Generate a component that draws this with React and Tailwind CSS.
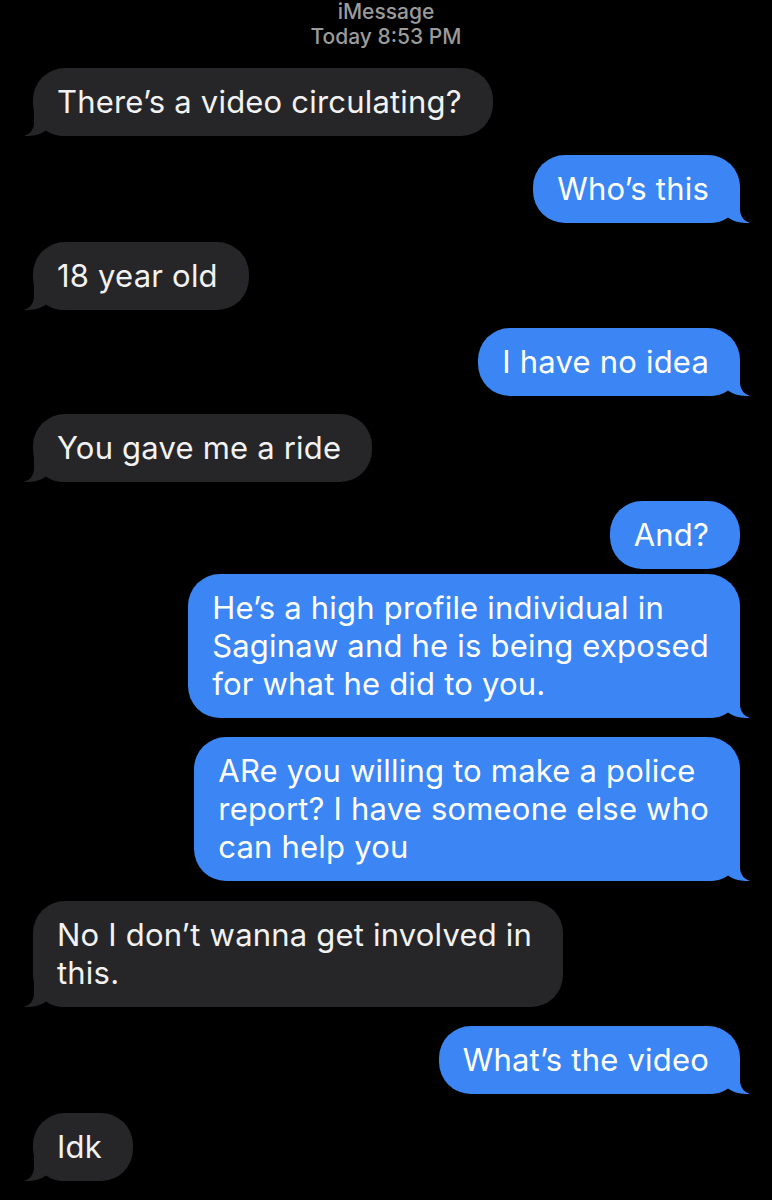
const MESSAGES = [
  { from: 'them', lines: ['There’s a video circulating?'], tail: true, gap: 'mt-[19px]' },
  { from: 'me', lines: ['Who’s this'], tail: true, gap: 'mt-[19px]' },
  { from: 'them', lines: ['18 year old'], tail: true, gap: 'mt-[19px]' },
  { from: 'me', lines: ['I have no idea'], tail: true, gap: 'mt-[18px]' },
  { from: 'them', lines: ['You gave me a ride'], tail: true, gap: 'mt-[18px]' },
  { from: 'me', lines: ['And?'], tail: false, gap: 'mt-[19px]' },
  {
    from: 'me',
    lines: ['He’s a high profile individual in', 'Saginaw and he is being exposed', 'for what he did to you.'],
    tail: true,
    gap: 'mt-[5px]',
  },
  {
    from: 'me',
    lines: ['ARe you willing to make a police', 'report? I have someone else who', 'can help you'],
    tail: true,
    gap: 'mt-[19px]',
  },
  { from: 'them', lines: ['No I don’t wanna get involved in', 'this.'], tail: true, gap: 'mt-[20px]' },
  { from: 'me', lines: ['What’s the video'], tail: true, gap: 'mt-[19px]' },
  { from: 'them', lines: ['Idk'], tail: true, gap: 'mt-[19px]' },
]

function Tail({ side, color }) {
  // corner flare of the bubble, drawn over the rounded corner
  if (side === 'right') {
    return (
      <svg className="absolute -right-[10px] bottom-0" width="42" height="33" viewBox="0 0 42 33">
        <path d="M32 0 L32 21 Q33 30 42 33 Q28 33.5 20 27.5 Q13 33 0 33 L0 0 Z" fill={color} />
      </svg>
    )
  }
  return (
    <svg className="absolute -left-[9px] bottom-0" width="42" height="33" viewBox="0 0 42 33">
      <path d="M10 0 L10 21 Q9 30 0 33 Q14 33.5 22 27.5 Q29 33 42 33 L42 0 Z" fill={color} />
    </svg>
  )
}

function Bubble({ msg }) {
  const mine = msg.from === 'me'
  return (
    <div className={`flex ${mine ? 'justify-end' : 'justify-start'} ${msg.gap}`}>
      <div
        className={`relative rounded-[32px] pl-[24px] pr-[31px] py-[15px] text-[31px] leading-[38px] tracking-[0.2px] ${
          mine ? 'bg-[#3b86f4] text-white' : 'bg-[#262628] text-[#f2f2f2]'
        }`}
      >
        {msg.tail && <Tail side={mine ? 'right' : 'left'} color={mine ? '#3b86f4' : '#262628'} />}
        <div className="relative whitespace-nowrap">
          {msg.lines.map((line, i) => (
            <div key={i}>{line}</div>
          ))}
        </div>
      </div>
    </div>
  )
}

export default function App() {
  return (
    <div
      className="w-[772px] h-[1200px] bg-black overflow-hidden"
      style={{ fontFamily: 'Inter, "Liberation Sans", sans-serif' }}
    >
      {/* Header */}
      <div className="-mt-[1px] text-center text-[21px] leading-[25px] font-medium text-[#9b9b9b]">
        <div>iMessage</div>
        <div>Today 8:53 PM</div>
      </div>

      {/* Thread */}
      <div className="pl-[33px] pr-[32px]">
        {MESSAGES.map((m, i) => (
          <Bubble key={i} msg={m} />
        ))}
      </div>
    </div>
  )
}
